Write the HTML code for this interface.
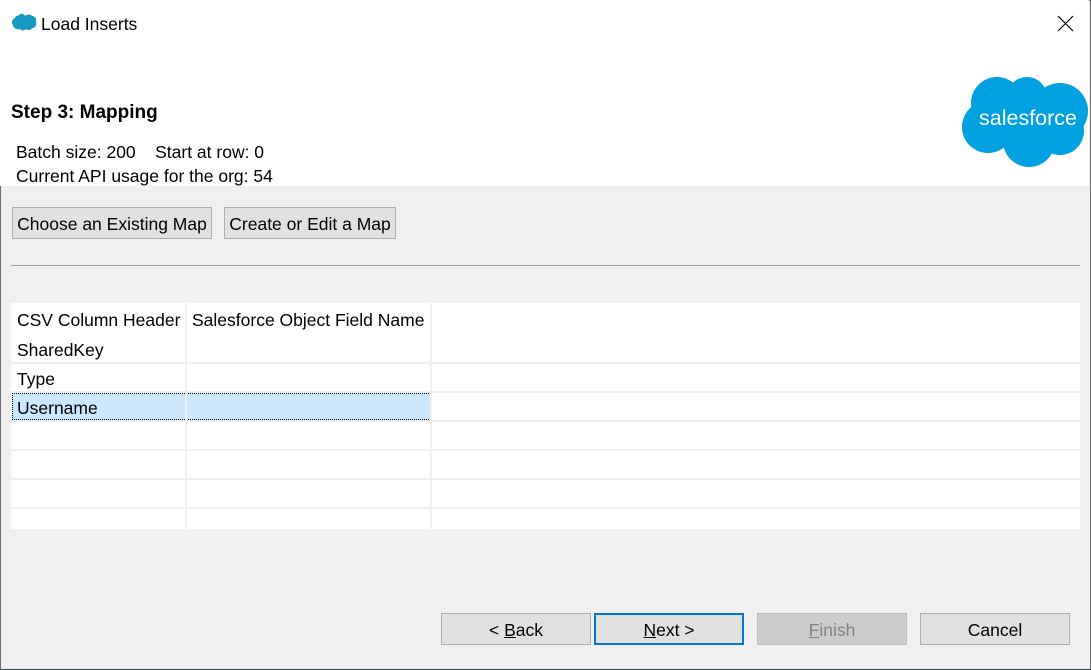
<!DOCTYPE html>
<html><head><style>
*{margin:0;padding:0;box-sizing:border-box}
body{width:1091px;height:670px;overflow:hidden;font-family:"Liberation Sans",sans-serif;font-size:17.5px;color:#000;background:#f0f0f0;position:relative}
.win{position:absolute;left:0;top:0;width:1091px;height:670px;border:1px solid #6d6d6d;border-bottom-color:#2b3e50}
.top{position:absolute;left:0;top:0;width:1089px;height:186px;background:#fff}
.t{position:absolute;white-space:nowrap;font-size:17.5px}
.btn{position:absolute;background:#e1e1e1;border:1px solid #adadad;text-align:center;font-size:17.5px;line-height:32px;white-space:nowrap}
.tbl{position:absolute;left:11px;top:303px;width:1069px;height:226px;background:#fff}
.hl{position:absolute;left:0;width:1069px;height:2px;background:#f0f0f0}
.vl{position:absolute;top:0;width:2px;height:226px;background:#f0f0f0}
.c{position:absolute;font-size:17.5px;white-space:nowrap}
</style></head><body>
<div class="win"></div>
<div class="top"></div>
<svg style="position:absolute;left:12px;top:13px" width="25" height="18" viewBox="0 0 25 18"><path d="M6 3c2-3 6-3 7 0 2-2 6-2 7 0 3 0 5 3 4 6 1 3-1 6-4 6-1 2-4 3-6 1-2 2-5 2-6 0-3 1-7-1-7-4-2-2-1-6 2-7 0-1 2-3 3-2z" fill="#1798c1"/></svg>
<div class="t" style="left:41px;top:14px">Load Inserts</div>
<svg style="position:absolute;left:1057px;top:15px" width="17" height="17"><path d="M1 1L16 16M16 1L1 16" stroke="#000" stroke-width="1.2"/></svg>
<div class="t" style="left:11px;top:102px;font-weight:bold;font-size:19px">Step 3: Mapping</div>
<div class="t" style="left:16px;top:142px">Batch size: 200&nbsp;&nbsp;&nbsp;&nbsp;Start at row: 0</div>
<div class="t" style="left:16px;top:166px">Current API usage for the org: 54</div>
<svg style="position:absolute;left:960px;top:75px" width="130" height="92" viewBox="0 0 130 92">
<g fill="#00a1e0"><circle cx="37" cy="28" r="26"/><circle cx="67" cy="22" r="20"/><circle cx="100" cy="36" r="28"/><circle cx="28" cy="52" r="26"/><circle cx="69" cy="66" r="26"/><circle cx="100" cy="56" r="24"/><circle cx="62" cy="45" r="30"/></g>
<text x="68" y="50" text-anchor="middle" fill="#fff" font-family="Liberation Sans, sans-serif" font-size="21" textLength="98" lengthAdjust="spacingAndGlyphs">salesforce</text></svg>
<div class="btn" style="left:12px;top:207px;width:200px;height:32px">Choose an Existing Map</div>
<div class="btn" style="left:224px;top:207px;width:172px;height:32px">Create or Edit a Map</div>
<div style="position:absolute;left:11px;top:265px;width:1069px;height:1px;background:#a0a0a0"></div>
<div class="tbl">
<div class="hl" style="top:59px"></div><div class="hl" style="top:88px"></div><div class="hl" style="top:117px"></div><div class="hl" style="top:146px"></div><div class="hl" style="top:175px"></div><div class="hl" style="top:204px"></div>
<div style="position:absolute;left:1px;top:90px;width:419px;height:27px;background:#cce8ff;border:1px dotted #000"></div>
<div class="vl" style="left:174px"></div><div class="vl" style="left:419px"></div>
<div class="c" style="left:6px;top:7px">CSV Column Header</div>
<div class="c" style="left:181px;top:7px">Salesforce Object Field Name</div>
<div class="c" style="left:6px;top:37px">SharedKey</div>
<div class="c" style="left:6px;top:66px">Type</div>
<div class="c" style="left:6px;top:95px">Username</div>
</div>
<div class="btn" style="left:441px;top:613px;width:150px;height:32px">&lt; <u>B</u>ack</div>
<div class="btn" style="left:594px;top:613px;width:150px;height:32px;border:2px solid #0078d7;line-height:30px"><u>N</u>ext &gt;</div>
<div class="btn" style="left:757px;top:613px;width:150px;height:32px;background:#cccccc;border-color:#bfbfbf;color:#838383"><u>F</u>inish</div>
<div class="btn" style="left:920px;top:613px;width:150px;height:32px">Cancel</div>
</body></html>
